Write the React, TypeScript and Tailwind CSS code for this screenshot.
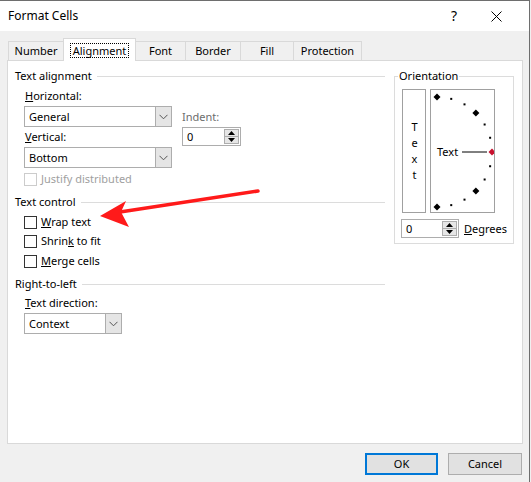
import React from "react";

const font = "font-['Noto_Sans','Liberation_Sans',sans-serif]";

function Chevron() {
  return (
    <svg width="9" height="6" viewBox="0 0 9 6" className="block">
      <polyline points="0.5,0.8 4.5,4.8 8.5,0.8" fill="none" stroke="#555" strokeWidth="1" />
    </svg>
  );
}

function Combo({ value, width }: { value: string; width: string }) {
  return (
    <div className={`${width} h-[21px] flex border border-[#adadad] bg-white`}>
      <div className="flex-1 flex items-center pl-[4px] text-black">{value}</div>
      <div className="w-[16px] flex items-center justify-center bg-[#e5e5e5] border-l border-[#adadad]">
        <Chevron />
      </div>
    </div>
  );
}

function Spin({ width }: { width: string }) {
  return (
    <div className={`${width} h-[19px] flex border border-[#adadad] bg-white`}>
      <div className="flex-1 flex items-center pl-[4px] text-black">0</div>
      <div className="w-[15px] flex flex-col my-[1px] mr-[1px]">
        <div className="flex-1 flex items-center justify-center bg-[#e6e6e6] border border-[#adadad]">
          <svg width="7" height="4" viewBox="0 0 7 4" className="block">
            <polygon points="0,4 7,4 3.5,0" fill="#000" />
          </svg>
        </div>
        <div className="flex-1 flex items-center justify-center bg-[#e6e6e6] border border-t-0 border-[#adadad]">
          <svg width="7" height="4" viewBox="0 0 7 4" className="block">
            <polygon points="0,0 7,0 3.5,4" fill="#000" />
          </svg>
        </div>
      </div>
    </div>
  );
}

function Section({ title, className = "" }: { title: string; className?: string }) {
  return (
    <div className={`h-4 flex items-center ${className}`}>
      <span className="text-black">{title}</span>
      <div className="flex-1 h-px bg-[#dcdcdc] ml-[5px]" />
    </div>
  );
}

function Check({ children, disabled, className = "" }: { children: React.ReactNode; disabled?: boolean; className?: string }) {
  return (
    <div className={`h-4 flex items-center pl-[9px] ${className}`}>
      <div className={`w-[13px] h-[13px] border bg-white ${disabled ? "border-[#cccccc]" : "border-[#333333]"}`} />
      <span className={`ml-[4px] ${disabled ? "text-[#a0a0a0]" : "text-black"}`}>{children}</span>
    </div>
  );
}

const tabs = [
  { label: "Number", w: "w-[56px]" },
  { label: "Alignment", w: "w-[73px]", active: true },
  { label: "Font", w: "w-[51px]" },
  { label: "Border", w: "w-[56px]" },
  { label: "Fill", w: "w-[54px]" },
  { label: "Protection", w: "w-[69px]" },
];

function ArcDial() {
  const cx = 6;
  const cy = 62;
  const r = 55;
  const marks = [];
  for (let i = 0; i <= 12; i++) {
    const a = ((90 - i * 15) * Math.PI) / 180;
    const x = cx + r * Math.cos(a);
    const y = cy - r * Math.sin(a);
    if (i % 3 === 0) {
      const s = 3.5;
      marks.push(
        <polygon
          key={i}
          points={`${x},${y - s} ${x + s},${y} ${x},${y + s} ${x - s},${y}`}
          fill={i === 6 ? "#c8102e" : "#000"}
        />
      );
    } else {
      marks.push(<rect key={i} x={x - 1} y={y - 1} width="2" height="2" fill="#000" />);
    }
  }
  return (
    <svg width="63" height="122" viewBox="0 0 63 122" className="block">
      {marks}
      <text x="6" y="66" fontSize="11" fontFamily="Noto Sans, sans-serif" fill="#000">
        Text
      </text>
      <line x1="31" y1="62" x2="56" y2="62" stroke="#000" strokeWidth="1" />
    </svg>
  );
}

export default function App() {
  return (
    <div className={`relative w-[531px] h-[482px] overflow-hidden bg-[#f0f0f0] text-[11px] leading-4 ${font}`}>
      <div className="w-[530px] h-full border-t border-r border-[#6e6e6e] flex flex-col">
        {/* title bar */}
        <div className="h-[30px] bg-white flex items-center">
          <span className="ml-[8px] text-[12px] text-black">Format Cells</span>
          <span className="ml-auto mr-[34px] text-[14px] text-black">?</span>
          <svg width="11" height="11" viewBox="0 0 11 11" className="mr-[27px] block">
            <path d="M0.5 0.5 L10.5 10.5 M10.5 0.5 L0.5 10.5" stroke="#000" strokeWidth="1" />
          </svg>
        </div>

        {/* tabs */}
        <div className="pt-[7px] pl-[8px] flex items-end">
          {tabs.map((t, i) =>
            t.active ? (
              <div
                key={t.label}
                className={`${t.w} -ml-px h-[23px] -mb-px relative z-10 bg-white border border-b-0 border-[#d9d9d9] flex items-center justify-center`}
              >
                <span className="px-[2px] border border-dotted border-black leading-[13px] text-black">{t.label}</span>
              </div>
            ) : (
              <div
                key={t.label}
                className={`${t.w} ${i === 0 ? "" : "-ml-px"} h-[19px] border border-b-0 border-[#d9d9d9] flex items-center justify-center text-black`}
              >
                {t.label}
              </div>
            )
          )}
        </div>

        {/* panel */}
        <div className="ml-[7px] w-[516px] h-[384px] bg-white border border-[#d9d9d9] flex">
          {/* left column */}
          <div className="w-[377px] pl-[7px] pt-[7px] flex flex-col">
            <Section title="Text alignment" />
            <div className="mt-[4px] flex">
              <div className="ml-[9px] w-[148px] flex flex-col">
                <div className="h-4 pl-[1px] text-black">
                  <u>H</u>orizontal:
                </div>
                <div className="mt-[2px]">
                  <Combo value="General" width="w-[148px]" />
                </div>
                <div className="mt-[2px] h-4 pl-[1px] text-black">
                  <u>V</u>ertical:
                </div>
                <div className="mt-[2px]">
                  <Combo value="Bottom" width="w-[148px]" />
                </div>
              </div>
              <div className="ml-[10px] flex flex-col">
                <div className="mt-[21px] h-4 text-[#6d6d6d]">Indent:</div>
                <div className="mt-[2px]">
                  <Spin width="w-[59px]" />
                </div>
              </div>
            </div>
            <Check disabled className="mt-[3px]">
              Justify distributed
            </Check>

            <Section title="Text control" className="mt-[7px]" />
            <Check className="mt-[4px]">
              <u>W</u>rap text
            </Check>
            <Check className="mt-[3px]">
              Shrin<u>k</u> to fit
            </Check>
            <Check className="mt-[4px]">
              <u>M</u>erge cells
            </Check>

            <Section title="Right-to-left" className="mt-[7px]" />
            <div className="mt-[3px] h-4 pl-[10px] text-black">
              <u>T</u>ext direction:
            </div>
            <div className="mt-[2px] ml-[9px]">
              <Combo value="Context" width="w-[98px]" />
            </div>
          </div>

          {/* orientation group */}
          <fieldset className="ml-[9px] mt-[7px] w-[120px] self-start border border-[#dcdcdc] pl-[3px] pt-[5px] pb-[5px]">
            <legend className="px-[1px] leading-4 text-black">Orientation</legend>
            <div className="ml-[4px] flex gap-[4px]">
              <div className="w-[24px] h-[124px] border border-[#a0a0a0] flex items-center justify-center text-black">
                <span className="[writing-mode:vertical-lr] [text-orientation:upright] tracking-[1px] leading-[12px]">
                  Text
                </span>
              </div>
              <div className="w-[65px] h-[124px] border border-[#a0a0a0]">
                <ArcDial />
              </div>
            </div>
            <div className="mt-[6px] ml-[3px] flex items-center">
              <Spin width="w-[58px]" />
              <span className="ml-[5px] text-black">
                <u>D</u>egrees
              </span>
            </div>
          </fieldset>
        </div>

        {/* buttons */}
        <div className="mt-[9px] flex justify-end pr-[7px] gap-[10px]">
          <div className="w-[73px] h-[22px] bg-[#e1e1e1] border-2 border-[#0078d7] flex items-center justify-center text-black">
            OK
          </div>
          <div className="w-[74px] h-[22px] bg-[#e1e1e1] border border-[#adadad] flex items-center justify-center text-black">
            Cancel
          </div>
        </div>
      </div>

      {/* red annotation arrow */}
      <svg className="absolute left-0 top-0 pointer-events-none" width="531" height="482" viewBox="0 0 531 482">
        <line x1="120" y1="212" x2="258" y2="191" stroke="#ff1a1a" strokeWidth="3.5" strokeLinecap="round" />
        <polygon points="100,216 126,201 121,212 129,227" fill="#ff1a1a" />
      </svg>
    </div>
  );
}
